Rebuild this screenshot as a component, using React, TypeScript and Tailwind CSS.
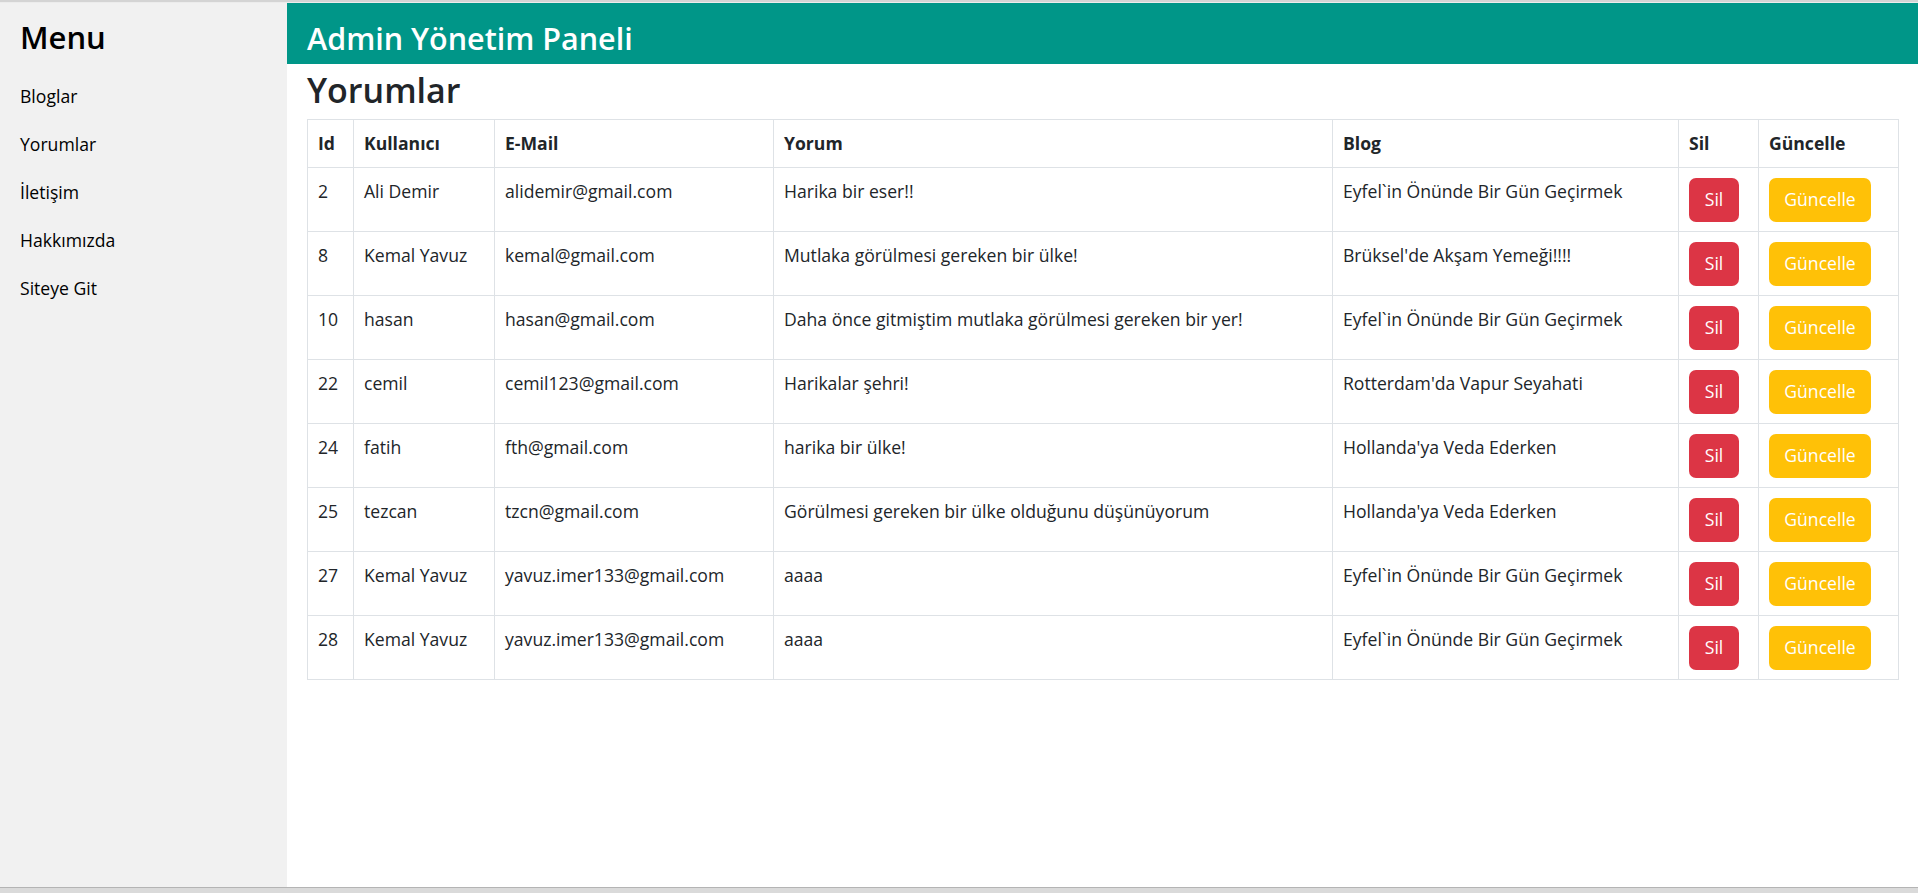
const MENU = ["Bloglar", "Yorumlar", "İletişim", "Hakkımızda", "Siteye Git"];

const COLUMNS = [
  { title: "Id", width: "w-[46px]" },
  { title: "Kullanıcı", width: "w-[141px]" },
  { title: "E-Mail", width: "w-[279px]" },
  { title: "Yorum", width: "w-[559px]" },
  { title: "Blog", width: "w-[346px]" },
  { title: "Sil", width: "w-[80px]" },
  { title: "Güncelle", width: "w-[140px]" },
];

type Comment = {
  id: number;
  user: string;
  email: string;
  text: string;
  blog: string;
};

const COMMENTS: Comment[] = [
  { id: 2, user: "Ali Demir", email: "alidemir@gmail.com", text: "Harika bir eser!!", blog: "Eyfel`in Önünde Bir Gün Geçirmek" },
  { id: 8, user: "Kemal Yavuz", email: "kemal@gmail.com", text: "Mutlaka görülmesi gereken bir ülke!", blog: "Brüksel'de Akşam Yemeği!!!!" },
  { id: 10, user: "hasan", email: "hasan@gmail.com", text: "Daha önce gitmiştim mutlaka görülmesi gereken bir yer!", blog: "Eyfel`in Önünde Bir Gün Geçirmek" },
  { id: 22, user: "cemil", email: "cemil123@gmail.com", text: "Harikalar şehri!", blog: "Rotterdam'da Vapur Seyahati" },
  { id: 24, user: "fatih", email: "fth@gmail.com", text: "harika bir ülke!", blog: "Hollanda'ya Veda Ederken" },
  { id: 25, user: "tezcan", email: "tzcn@gmail.com", text: "Görülmesi gereken bir ülke olduğunu düşünüyorum", blog: "Hollanda'ya Veda Ederken" },
  { id: 27, user: "Kemal Yavuz", email: "yavuz.imer133@gmail.com", text: "aaaa", blog: "Eyfel`in Önünde Bir Gün Geçirmek" },
  { id: 28, user: "Kemal Yavuz", email: "yavuz.imer133@gmail.com", text: "aaaa", blog: "Eyfel`in Önünde Bir Gün Geçirmek" },
];

const cell = "border border-[#dee2e6] px-[10px] pt-[10px] pb-[9px] align-top";

export default function App() {
  return (
    <div className="flex h-[893px] w-full flex-col overflow-hidden bg-white font-['Open_Sans',sans-serif] text-[#212529]">
      <div className="h-[3px] border-t-2 border-[#d4d4d4] bg-[#ececec]" />

      <div className="flex min-h-0 flex-1">
        <aside className="w-[287px] shrink-0 bg-[#f1f1f1] pl-[20px] pt-[15px] text-black">
          <h3 className="text-[31px] font-semibold leading-[38px]">Menu</h3>
          <ul className="mt-[16px]">
            {MENU.map((item) => (
              <li key={item} className="text-[17.6px] leading-[48px]">
                <a href="#">{item}</a>
              </li>
            ))}
          </ul>
        </aside>

        <main className="min-w-0 flex-1">
          <div className="h-[61px] bg-[#009688] pl-[20px] pt-[17px]">
            <h3 className="text-[30.5px] font-semibold leading-[36px] text-white">Admin Yönetim Paneli</h3>
          </div>

          <div className="px-[20px]">
            <h2 className="mb-[8px] mt-[5px] text-[34px] font-semibold leading-[42px]">Yorumlar</h2>

            <table className="w-full table-fixed border-collapse text-[17.6px] leading-[27.6px]">
              <thead>
                <tr>
                  {COLUMNS.map((c) => (
                    <th key={c.title} className={`${cell} ${c.width} text-left font-bold`}>
                      {c.title}
                    </th>
                  ))}
                </tr>
              </thead>
              <tbody>
                {COMMENTS.map((c) => (
                  <tr key={c.id}>
                    <td className={cell}>{c.id}</td>
                    <td className={cell}>{c.user}</td>
                    <td className={cell}>{c.email}</td>
                    <td className={cell}>{c.text}</td>
                    <td className={cell}>{c.blog}</td>
                    <td className={cell}>
                      <button className="flex h-[44px] w-[50px] items-center justify-center rounded-[7px] bg-[#dc3545] text-white">
                        Sil
                      </button>
                    </td>
                    <td className={cell}>
                      <button className="flex h-[44px] w-[102px] items-center justify-center rounded-[7px] bg-[#ffc107] text-white">
                        Güncelle
                      </button>
                    </td>
                  </tr>
                ))}
              </tbody>
            </table>
          </div>
        </main>
      </div>

      <div className="h-[6px] border-t border-[#b4b4b4] bg-[#dadada]" />
    </div>
  );
}
